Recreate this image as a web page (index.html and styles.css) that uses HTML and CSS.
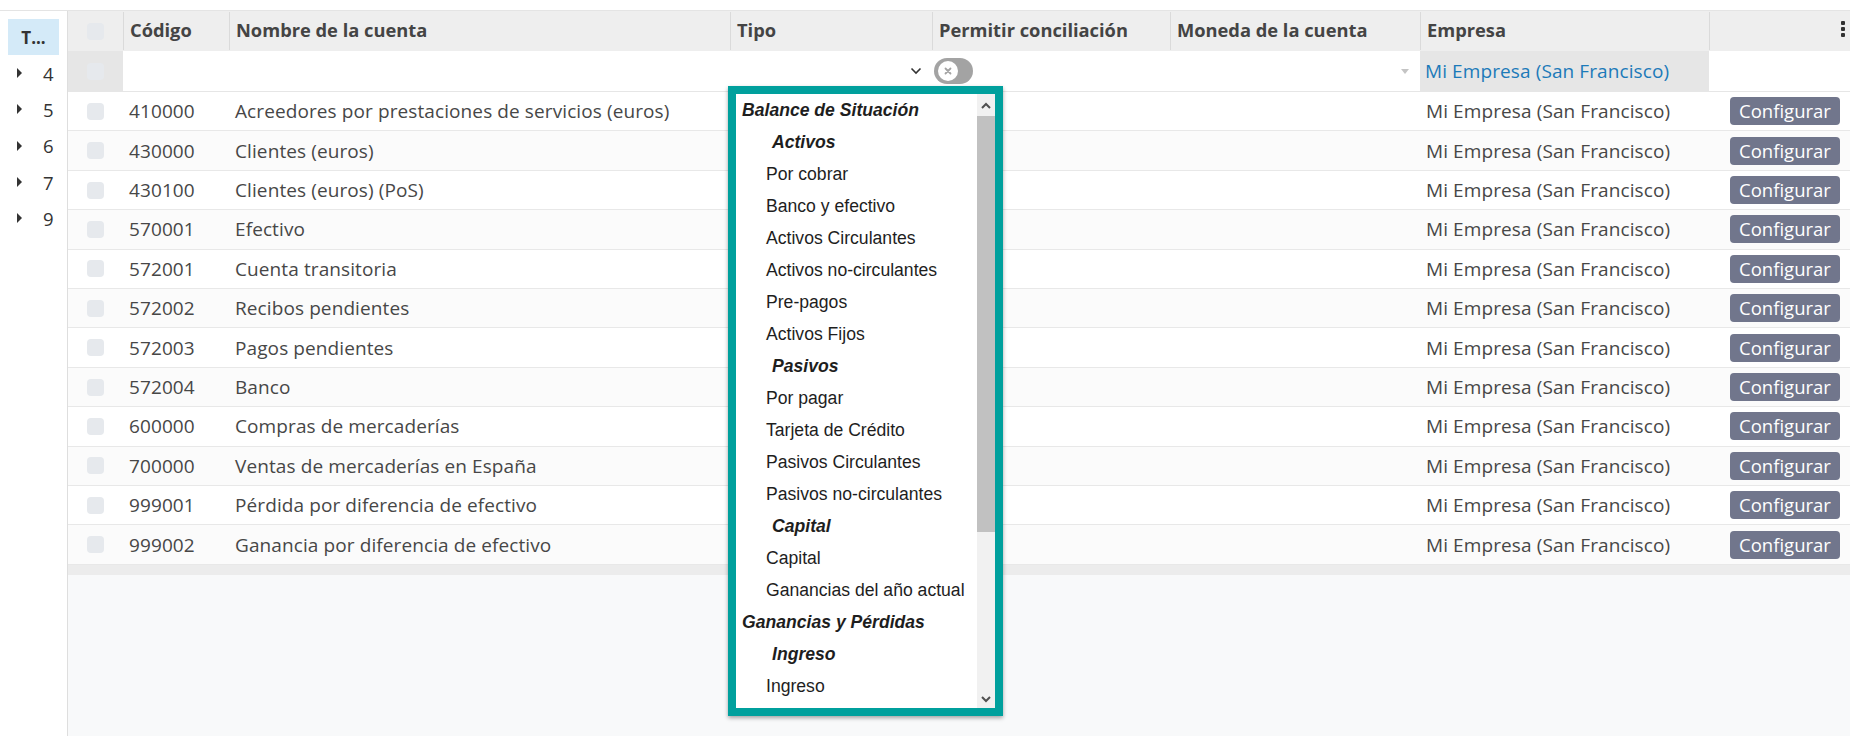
FILE: index.html
```html
<!DOCTYPE html>
<html lang="es">
<head>
<meta charset="utf-8">
<title>Plan de cuentas</title>
<link rel="stylesheet" href="styles.css">
</head>
<body>
<div class="app">
  <aside class="sidebar">
    <div class="side-head">T...</div>
    <ul class="groups">
      <li><span class="caret"></span><span>4</span></li>
      <li><span class="caret"></span><span>5</span></li>
      <li><span class="caret"></span><span>6</span></li>
      <li><span class="caret"></span><span>7</span></li>
      <li><span class="caret"></span><span>9</span></li>
    </ul>
  </aside>
  <main class="main">
    <div class="table">
      <div class="row head">
        <div class="cell sel"><span class="cb"></span></div>
        <div class="cell">Código</div>
        <div class="cell">Nombre de la cuenta</div>
        <div class="cell">Tipo</div>
        <div class="cell">Permitir conciliación</div>
        <div class="cell">Moneda de la cuenta</div>
        <div class="cell">Empresa</div>
        <div class="cell opt"><span class="kebab"><i></i><i></i><i></i></span></div>
      </div>
      <div class="row filter">
        <div class="cell sel grey"><span class="cb"></span></div>
        <div class="cell"></div>
        <div class="cell"></div>
        <div class="cell type"><svg class="chev" width="12" height="8" viewBox="0 0 12 8"><path d="M1.5 1.5 L6 6 L10.5 1.5" fill="none" stroke="#333" stroke-width="1.6"/></svg></div>
        <div class="cell"><span class="toggle"><span class="knob"><svg width="10" height="10" viewBox="0 0 10 10"><path d="M2.5 2.5 L7.5 7.5 M7.5 2.5 L2.5 7.5" stroke="#a3a3a3" stroke-width="1.8" stroke-linecap="round"/></svg></span></span></div>
        <div class="cell cur"><span class="tri"></span></div>
        <div class="cell grey link">Mi Empresa (San Francisco)</div>
        <div class="cell"></div>
      </div>
      <div class="row data"><div class="cell sel"><span class="cb"></span></div><div class="cell">410000</div><div class="cell">Acreedores por prestaciones de servicios (euros)</div><div class="cell"></div><div class="cell"></div><div class="cell"></div><div class="cell">Mi Empresa (San Francisco)</div><div class="cell btn-cell"><button class="btn">Configurar</button></div></div>
      <div class="row data"><div class="cell sel"><span class="cb"></span></div><div class="cell">430000</div><div class="cell">Clientes (euros)</div><div class="cell"></div><div class="cell"></div><div class="cell"></div><div class="cell">Mi Empresa (San Francisco)</div><div class="cell btn-cell"><button class="btn">Configurar</button></div></div>
      <div class="row data"><div class="cell sel"><span class="cb"></span></div><div class="cell">430100</div><div class="cell">Clientes (euros) (PoS)</div><div class="cell"></div><div class="cell"></div><div class="cell"></div><div class="cell">Mi Empresa (San Francisco)</div><div class="cell btn-cell"><button class="btn">Configurar</button></div></div>
      <div class="row data"><div class="cell sel"><span class="cb"></span></div><div class="cell">570001</div><div class="cell">Efectivo</div><div class="cell"></div><div class="cell"></div><div class="cell"></div><div class="cell">Mi Empresa (San Francisco)</div><div class="cell btn-cell"><button class="btn">Configurar</button></div></div>
      <div class="row data"><div class="cell sel"><span class="cb"></span></div><div class="cell">572001</div><div class="cell">Cuenta transitoria</div><div class="cell"></div><div class="cell"></div><div class="cell"></div><div class="cell">Mi Empresa (San Francisco)</div><div class="cell btn-cell"><button class="btn">Configurar</button></div></div>
      <div class="row data"><div class="cell sel"><span class="cb"></span></div><div class="cell">572002</div><div class="cell">Recibos pendientes</div><div class="cell"></div><div class="cell"></div><div class="cell"></div><div class="cell">Mi Empresa (San Francisco)</div><div class="cell btn-cell"><button class="btn">Configurar</button></div></div>
      <div class="row data"><div class="cell sel"><span class="cb"></span></div><div class="cell">572003</div><div class="cell">Pagos pendientes</div><div class="cell"></div><div class="cell"></div><div class="cell"></div><div class="cell">Mi Empresa (San Francisco)</div><div class="cell btn-cell"><button class="btn">Configurar</button></div></div>
      <div class="row data"><div class="cell sel"><span class="cb"></span></div><div class="cell">572004</div><div class="cell">Banco</div><div class="cell"></div><div class="cell"></div><div class="cell"></div><div class="cell">Mi Empresa (San Francisco)</div><div class="cell btn-cell"><button class="btn">Configurar</button></div></div>
      <div class="row data"><div class="cell sel"><span class="cb"></span></div><div class="cell">600000</div><div class="cell">Compras de mercaderías</div><div class="cell"></div><div class="cell"></div><div class="cell"></div><div class="cell">Mi Empresa (San Francisco)</div><div class="cell btn-cell"><button class="btn">Configurar</button></div></div>
      <div class="row data"><div class="cell sel"><span class="cb"></span></div><div class="cell">700000</div><div class="cell">Ventas de mercaderías en España</div><div class="cell"></div><div class="cell"></div><div class="cell"></div><div class="cell">Mi Empresa (San Francisco)</div><div class="cell btn-cell"><button class="btn">Configurar</button></div></div>
      <div class="row data"><div class="cell sel"><span class="cb"></span></div><div class="cell">999001</div><div class="cell">Pérdida por diferencia de efectivo</div><div class="cell"></div><div class="cell"></div><div class="cell"></div><div class="cell">Mi Empresa (San Francisco)</div><div class="cell btn-cell"><button class="btn">Configurar</button></div></div>
      <div class="row data"><div class="cell sel"><span class="cb"></span></div><div class="cell">999002</div><div class="cell">Ganancia por diferencia de efectivo</div><div class="cell"></div><div class="cell"></div><div class="cell"></div><div class="cell">Mi Empresa (San Francisco)</div><div class="cell btn-cell"><button class="btn">Configurar</button></div></div>
      <div class="hscroll"></div>
    </div>

    <div class="dropdown">
      <div class="dd-inner">
        <ul class="dd-list">
          <li class="g">Balance de Situación</li>
          <li class="sg">Activos</li>
          <li>Por cobrar</li>
          <li>Banco y efectivo</li>
          <li>Activos Circulantes</li>
          <li>Activos no-circulantes</li>
          <li>Pre-pagos</li>
          <li>Activos Fijos</li>
          <li class="sg">Pasivos</li>
          <li>Por pagar</li>
          <li>Tarjeta de Crédito</li>
          <li>Pasivos Circulantes</li>
          <li>Pasivos no-circulantes</li>
          <li class="sg">Capital</li>
          <li>Capital</li>
          <li>Ganancias del año actual</li>
          <li class="g">Ganancias y Pérdidas</li>
          <li class="sg">Ingreso</li>
          <li>Ingreso</li>
        </ul>
        <div class="sbar">
          <div class="sb-btn"><svg width="10" height="7" viewBox="0 0 10 7"><path d="M1 6 L5 2 L9 6" fill="none" stroke="#505050" stroke-width="2"/></svg></div>
          <div class="sb-thumb"></div>
          <div class="sb-track"></div>
          <div class="sb-btn"><svg width="10" height="7" viewBox="0 0 10 7"><path d="M1 1 L5 5 L9 1" fill="none" stroke="#505050" stroke-width="2"/></svg></div>
        </div>
      </div>
    </div>
  </main>
</div>
</body>
</html>
```

FILE: styles.css
```css
* { box-sizing: border-box; }
html, body { margin: 0; padding: 0; }
body {
  background: #fff;
  font-family: "Open Sans", "Liberation Sans", sans-serif;
  font-size: 19px;
  letter-spacing: 0.1px;
  color: #474747;
  width: 1850px;
  height: 736px;
  overflow: hidden;
  padding-top: 10px;
}
.app {
  display: flex;
  height: 726px;
  border-top: 1px solid #e4e4e4;
}
.sidebar {
  width: 68px;
  flex: none;
  border-right: 1px solid #dedede;
  background: #fff;
  padding: 8px 0 0 8px;
}
.side-head {
  width: 51px;
  height: 36px;
  background: #d4eaf8;
  color: #333;
  font-weight: 700;
  font-size: 17px;
  letter-spacing: 0;
  display: flex;
  align-items: center;
  justify-content: center;
}
.groups {
  list-style: none;
  margin: 0;
  padding: 0;
}
.groups li {
  height: 36.3px;
  display: flex;
  align-items: center;
  color: #333;
  font-size: 18.5px;
}
.caret {
  width: 0;
  height: 0;
  border-left: 5px solid #333;
  border-top: 5px solid transparent;
  border-bottom: 5px solid transparent;
  margin: 0 21px 0 9px;
}
.main {
  flex: 1;
  background: #f8f9fa;
  position: relative;
}
.table { background: #fff; }
.row {
  display: grid;
  grid-template-columns: 55px 106px 501px 202px 238px 250px 289px 1fr;
}
.cell {
  padding: 0 6px;
  display: flex;
  align-items: center;
  white-space: nowrap;
  overflow: hidden;
}
.head {
  height: 40px;
  background: #eeeeee;
  font-weight: 700;
  color: #444;
  font-size: 18.3px;
  letter-spacing: 0;
}
.head .cell { border-left: 1px solid #dadada; margin: 1px 0; padding-bottom: 4px; }
.head .cell:first-child { border-left: none; padding-bottom: 0; }
.sel { justify-content: center; padding: 0; }
.cb {
  width: 17px;
  height: 17px;
  border-radius: 4px;
  background: #e6e9ed;
}
.opt { justify-content: flex-end; padding-right: 5px; }
.kebab { display: flex; flex-direction: column; gap: 2px; }
.kebab i { width: 4px; height: 4px; background: #333; border-radius: 1px; display: block; }
.filter {
  height: 41px;
  border-bottom: 1px solid #e6e6e6;
}
.grey { background: #e6e6e6; }
.link { color: #1c7ab9; padding-left: 5px; }
.type { justify-content: flex-end; padding-right: 10px; }
.cur { justify-content: flex-end; padding-right: 11px; }
.tri {
  width: 0; height: 0;
  border-top: 5px solid #c4c4c4;
  border-left: 4px solid transparent;
  border-right: 4px solid transparent;
}
.toggle {
  width: 39px;
  height: 26px;
  border-radius: 13px;
  background: #a3a3a3;
  display: flex;
  align-items: center;
  padding-left: 4px;
  margin-left: -4px;
}
.knob {
  width: 20px; height: 20px;
  border-radius: 50%;
  background: #fff;
  display: flex; align-items: center; justify-content: center;
}
.data {
  height: 39.42px;
  border-bottom: 1px solid #e8e8e8;
}
.data:nth-of-type(even) { background: #fbfbfb; }
.data:nth-of-type(odd) { background: #fff; }
.btn-cell { justify-content: flex-end; padding-right: 10px; }
.btn {
  font-family: inherit;
  font-size: 18.5px;
  color: #fff;
  background: #71768c;
  border: none;
  border-radius: 4px;
  width: 110px;
  height: 28px;
  padding: 0;
  line-height: 28px;
}
.hscroll { height: 10px; background: #ececec; }

.dropdown {
  position: absolute;
  left: 660px;
  top: 75px;
  width: 275px;
  height: 630px;
  border: 8px solid #00a09d;
  background: #fff;
  box-shadow: 0 2px 4px rgba(0,0,0,0.35);
  font-family: "Liberation Sans", Arial, sans-serif;
  font-size: 17.6px;
  letter-spacing: 0;
  color: #1e1e1e;
}
.dd-inner { display: flex; height: 100%; }
.dd-list {
  list-style: none;
  margin: 0;
  padding: 0;
  flex: 1;
  overflow: hidden;
}
.dd-list li {
  height: 32px;
  display: flex;
  align-items: center;
  padding-left: 30px;
}
.dd-list li.g { font-weight: 700; font-style: italic; padding-left: 6px; }
.dd-list li.sg { font-weight: 700; font-style: italic; padding-left: 36px; }
.sbar {
  width: 18px;
  display: flex;
  flex-direction: column;
  background: #f1f1f1;
}
.sb-btn { height: 22px; display: flex; align-items: center; justify-content: center; }
.sb-btn:last-child { height: 18px; }
.sb-thumb { height: 416px; background: #c1c1c1; }
.sb-track { flex: 1; }
```
